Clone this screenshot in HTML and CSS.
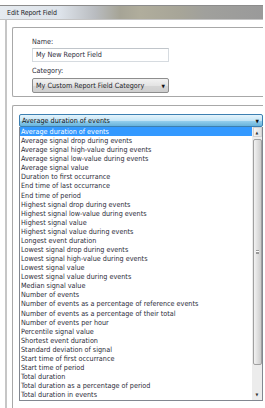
FILE: index.html
```html
<!DOCTYPE html>
<html lang="en">
<head>
    <meta charset="UTF-8">
    <title>Edit Report Field</title>
    <link rel="stylesheet" href="styles.css">
</head>
<body>
    <div class="titlebar">Edit Report Field</div>

    <div class="frame">
        <div class="group group-top">
            <div class="label">Name:</div>
            <div class="textbox">My New Report Field</div>
            <div class="label">Category:</div>
            <div class="select">
                <span>My Custom Report Field Category</span>
                <span class="arrow">&#9660;</span>
            </div>
        </div>

        <div class="group group-list">
            <div class="combo">
                <span>Average duration of events</span>
                <span class="arrow">&#9660;</span>
            </div>
            <div class="listbox">
                <ul class="items" id="items"></ul>
                <div class="scrollbar">
                    <div class="sb-btn">&#9650;</div>
                    <div class="sb-thumb"><span class="grip"></span></div>
                    <div class="sb-btn sb-down">&#9660;</div>
                </div>
            </div>
        </div>
    </div>

    <script>
        const fields = [
            'Average duration of events',
            'Average signal drop during events',
            'Average signal high-value during events',
            'Average signal low-value during events',
            'Average signal value',
            'Duration to first occurrance',
            'End time of last occurrance',
            'End time of period',
            'Highest signal drop during events',
            'Highest signal low-value during events',
            'Highest signal value',
            'Highest signal value during events',
            'Longest event duration',
            'Lowest signal drop during events',
            'Lowest signal high-value during events',
            'Lowest signal value',
            'Lowest signal value during events',
            'Median signal value',
            'Number of events',
            'Number of events as a percentage of reference events',
            'Number of events as a percentage of their total',
            'Number of events per hour',
            'Percentile signal value',
            'Shortest event duration',
            'Standard deviation of signal',
            'Start time of first occurrance',
            'Start time of period',
            'Total duration',
            'Total duration as a percentage of period',
            'Total duration in events'
        ];

        const list = document.getElementById('items');
        fields.forEach((name, i) => {
            const li = document.createElement('li');
            li.textContent = name;
            if (i === 0) li.classList.add('selected');
            list.appendChild(li);
        });
    </script>
</body>
</html>
```

FILE: styles.css
```css
body {
    margin: 0;
    padding: 0;
    width: 265px;
    height: 408px;
    overflow: hidden;
    background: #ffffff;
    font-family: 'DejaVu Sans Condensed', 'DejaVu Sans', sans-serif;
    font-size: 7.2px;
    color: #2b2b38;
}

.titlebar {
    margin-top: 5px;
    width: 263px;
    height: 15px;
    line-height: 14px;
    padding-left: 7px;
    box-sizing: border-box;
    font-size: 7px;
    letter-spacing: -0.1px;
    color: #1e1e28;
    background: linear-gradient(to right, #e6ebf0 0px, #dde3ea 60px, #b9bcc0 95px, #a6a496 120px, #b0ad9c 140px, #a7a598 180px, #a0a09c 205px, #9a9a9a 263px);
    border-top: 1px solid #8c8c8c;
    border-bottom: 1px solid #c4c4c4;
}

.frame {
    margin-left: 5px;
    border-left: 2px solid #c6c6c6;
    padding-left: 5px;
    padding-top: 7px;
    width: 251px;
    height: 400px;
}

.group {
    border: 1px solid #a8a8a8;
    border-right: none;
    border-radius: 2px 0 0 2px;
}

.group-top {
    height: 70px;
    padding-left: 19px;
    box-sizing: border-box;
    padding-top: 9px;
}

.label {
    height: 10px;
    line-height: 10px;
}

.textbox {
    width: 137px;
    height: 14px;
    line-height: 12px;
    margin: 1px 0 4px;
    padding-left: 3px;
    box-sizing: border-box;
    border: 1px solid #d6dbe0;
    border-top-color: #c0c5ca;
}

.select {
    width: 137px;
    height: 15px;
    margin-top: 2px;
    box-sizing: border-box;
    padding: 0 3px 0 3px;
    display: flex;
    align-items: center;
    justify-content: space-between;
    border: 1px solid #8e8e8e;
    border-radius: 2px;
    background: linear-gradient(#f2f2f2, #e4e4e4 50%, #d6d6d6 51%, #cfcfcf);
    color: #1e1e28;
}

.arrow {
    font-size: 5px;
    color: #111;
}

.group-list {
    margin-top: 8px;
    padding: 8px 0 0 6px;
    height: 300px;
}

.combo {
    width: 244px;
    height: 13px;
    box-sizing: border-box;
    padding: 0 3px 0 2px;
    display: flex;
    align-items: center;
    justify-content: space-between;
    border: 1px solid #3c7fb1;
    border-radius: 2px;
    background: linear-gradient(#e5f4fc, #c4e5f6 50%, #98d1ef 51%, #68b3db);
    color: #141414;
}

.listbox {
    width: 244px;
    height: 274px;
    box-sizing: border-box;
    border: 1px solid #828790;
    border-top: none;
    display: flex;
}

.items {
    list-style: none;
    margin: 0;
    padding: 0;
    flex: 1;
    overflow: hidden;
}

.items li {
    height: 9.08px;
    line-height: 9.08px;
    padding-left: 1px;
    white-space: nowrap;
}

.items li.selected {
    background: #3399ff;
    color: #ffffff;
}

.scrollbar {
    width: 10px;
    background: #ececec;
    display: flex;
    flex-direction: column;
    align-items: center;
}

.sb-btn {
    width: 9px;
    height: 10px;
    font-size: 4px;
    line-height: 10px;
    text-align: center;
    color: #333;
    background: linear-gradient(to right, #f4f4f4, #e2e2e2);
    border: 1px solid #d2d2d2;
    box-sizing: border-box;
}

.sb-thumb {
    width: 9px;
    height: 226px;
    margin-top: 2px;
    box-sizing: border-box;
    border: 1px solid #a0a0a0;
    border-radius: 2px;
    background: linear-gradient(to right, #f2f2f2, #e0e0e0 50%, #cdcdcd);
    display: flex;
    align-items: center;
    justify-content: center;
}

.grip {
    width: 3px;
    height: 4px;
    border-top: 1px solid #999;
    border-bottom: 1px solid #999;
    box-sizing: border-box;
    background: linear-gradient(#fff 0, #fff 1px, #999 1px, #999 2px, #fff 2px);
}

.sb-down {
    margin-top: auto;
    border: none;
    background: transparent;
}
```
